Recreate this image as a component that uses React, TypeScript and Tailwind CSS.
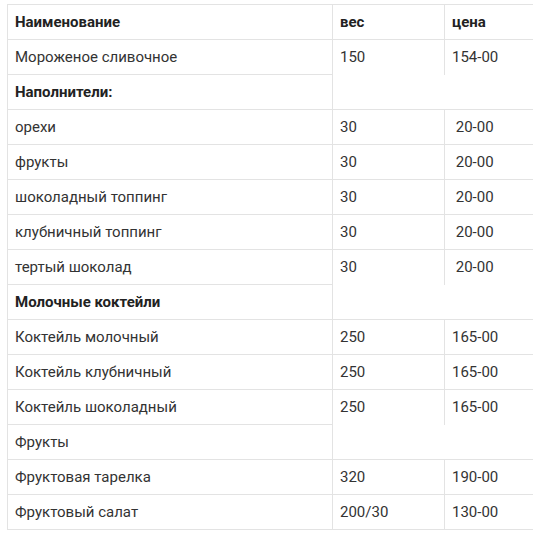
type Row =
  | { kind: 'head' }
  | { kind: 'item'; name: string; weight: string; price: string; open?: boolean }
  | { kind: 'section'; name: string; bold: boolean };

const rows: Row[] = [
  { kind: 'head' },
  { kind: 'item', name: 'Мороженое сливочное', weight: '150', price: '154-00', open: true },
  { kind: 'section', name: 'Наполнители:', bold: true },
  { kind: 'item', name: 'орехи', weight: '30', price: '\u00a020-00' },
  { kind: 'item', name: 'фрукты', weight: '30', price: '\u00a020-00' },
  { kind: 'item', name: 'шоколадный топпинг', weight: '30', price: '\u00a020-00' },
  { kind: 'item', name: 'клубничный топпинг', weight: '30', price: '\u00a020-00' },
  { kind: 'item', name: 'тертый шоколад', weight: '30', price: '\u00a020-00', open: true },
  { kind: 'section', name: 'Молочные коктейли', bold: true },
  { kind: 'item', name: 'Коктейль молочный', weight: '250', price: '165-00' },
  { kind: 'item', name: 'Коктейль клубничный', weight: '250', price: '165-00' },
  { kind: 'item', name: 'Коктейль шоколадный', weight: '250', price: '165-00', open: true },
  { kind: 'section', name: 'Фрукты', bold: false },
  { kind: 'item', name: 'Фруктовая тарелка', weight: '320', price: '190-00' },
  { kind: 'item', name: 'Фруктовый салат', weight: '200/30', price: '130-00' },
];

const cell = 'h-[35px] px-[7px] align-middle border-r border-b border-[#e3e3e3]';

export default function App() {
  return (
    <div className="w-[533px] h-[535px] overflow-hidden bg-white pt-[4px] pl-[7px] font-['Roboto',sans-serif] text-[15px] text-[#333]">
      <table className="w-[580px] table-fixed border-separate border-spacing-0 border-l border-t border-[#e3e3e3]">
        <colgroup>
          <col className="w-[325px]" />
          <col className="w-[112px]" />
          <col />
        </colgroup>
        <tbody>
          {rows.map((r, i) => {
            if (r.kind === 'head') {
              return (
                <tr key={i} className="font-bold text-[#222]">
                  <td className={cell}>Наименование</td>
                  <td className={cell}>вес</td>
                  <td className={cell}>цена</td>
                </tr>
              );
            }
            if (r.kind === 'section') {
              return (
                <tr key={i}>
                  <td className={`${cell} ${r.bold ? 'font-bold text-[#222]' : ''}`}>{r.name}</td>
                  <td colSpan={2} className={cell}></td>
                </tr>
              );
            }
            const side = r.open
              ? 'h-[35px] px-[7px] align-middle border-r border-[#e3e3e3]'
              : cell;
            return (
              <tr key={i}>
                <td className={cell}>{r.name}</td>
                <td className={side}>{r.weight}</td>
                <td className={side}>{r.price}</td>
              </tr>
            );
          })}
        </tbody>
      </table>
    </div>
  );
}
